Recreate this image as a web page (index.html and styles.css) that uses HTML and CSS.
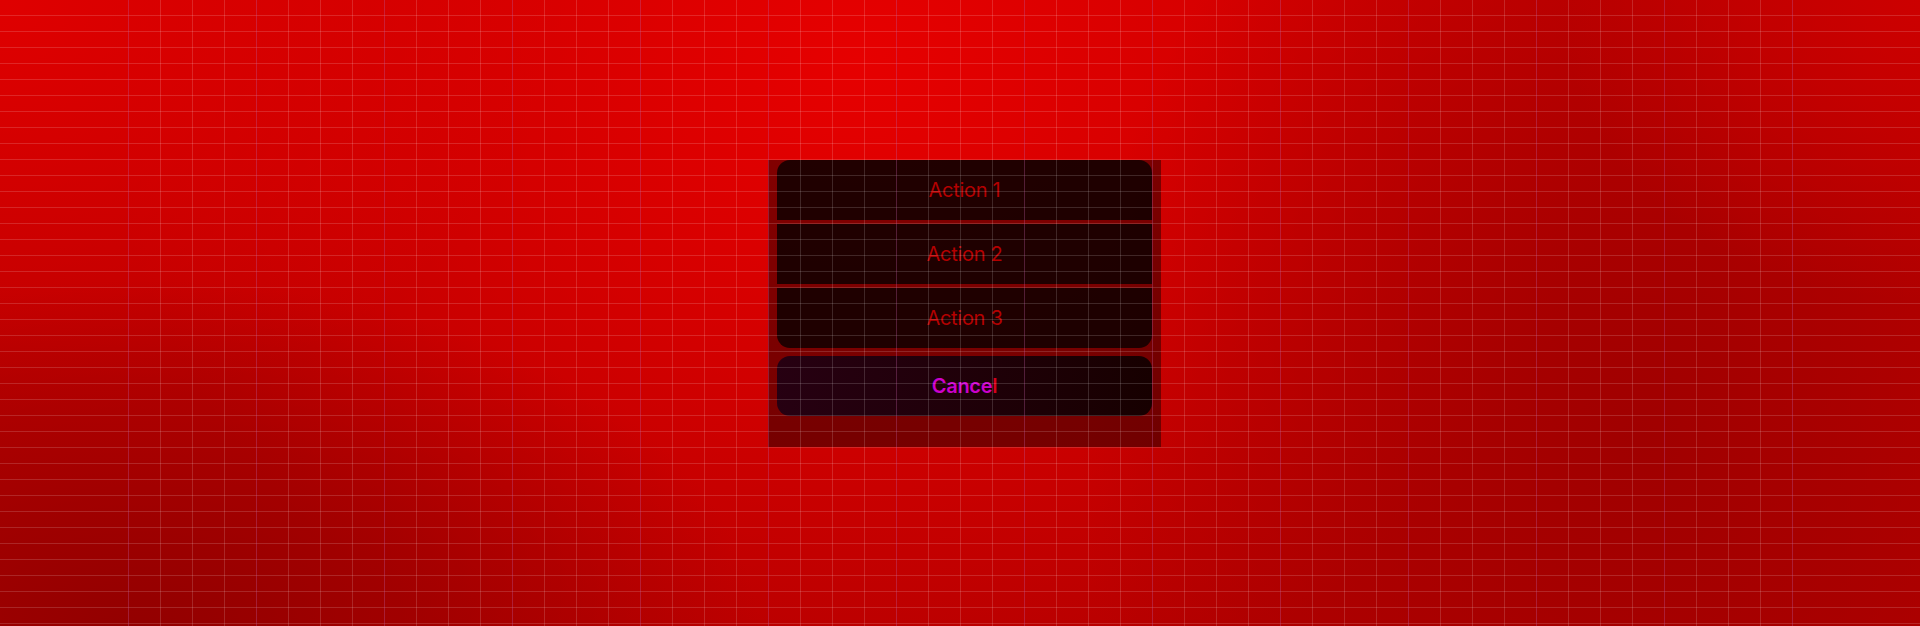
FILE: index.html
```html
<!DOCTYPE html>
<html lang="en">
<head>
<meta charset="utf-8">
<title>Action Sheet</title>
<link rel="stylesheet" href="styles.css">
</head>
<body>
<div class="page">
  <div class="sheet">
    <div class="group">
      <button class="btn btn-first">Action 1</button>
      <button class="btn">Action 2</button>
      <button class="btn btn-last">Action 3</button>
    </div>
    <div class="group group-cancel">
      <button class="btn btn-cancel">Cance<span class="tail">l</span></button>
    </div>
  </div>
  <div class="grid-h"></div>
  <div class="grid-v"></div>
</div>
</body>
</html>
```

FILE: styles.css
```css
html, body {
  margin: 0;
  padding: 0;
  width: 1920px;
  height: 626px;
  overflow: hidden;
}

.page {
  position: relative;
  width: 1920px;
  height: 626px;
  box-sizing: border-box;
  padding: 160px 0 0 768px;
  font-family: Inter, "Noto Sans", sans-serif;
  background:
    radial-gradient(ellipse 360px 300px at 1920px 0px, rgba(206,0,0,0.9), rgba(206,0,0,0) 100%),
    radial-gradient(ellipse 560px 720px at 1640px 440px, rgba(160,0,0,1), rgba(160,0,0,0) 100%),
    radial-gradient(ellipse 620px 360px at 140px 640px, rgba(146,0,0,1), rgba(146,0,0,0) 100%),
    radial-gradient(ellipse 560px 420px at 0px 0px, rgba(226,0,0,0.9), rgba(226,0,0,0) 100%),
    radial-gradient(ellipse 760px 680px at 860px 60px, rgba(230,0,0,1), rgba(230,0,0,0) 100%),
    linear-gradient(180deg, #c60000 0%, #b40000 100%);
}

.sheet {
  width: 393px;
  box-sizing: border-box;
  padding: 0 9px 31px;
  background: rgba(0, 0, 0, 0.42);
  display: flex;
  flex-direction: column;
  gap: 8px;
}

.group {
  display: flex;
  flex-direction: column;
  gap: 4px;
}

.btn {
  display: flex;
  align-items: center;
  justify-content: center;
  height: 60px;
  width: 100%;
  border: 0;
  margin: 0;
  padding: 0;
  background: rgba(0, 0, 0, 0.75);
  color: #b40000;
  font-family: Inter, "Noto Sans", sans-serif;
  font-size: 20px;
  font-weight: 400;
  letter-spacing: -0.3px;
}

.btn-first {
  border-radius: 13px 13px 0 0;
}

.btn-last {
  border-radius: 0 0 13px 13px;
}

.btn-cancel {
  border-radius: 13px;
  background: linear-gradient(90deg, rgba(18, 0, 22, 0.8), rgba(0, 0, 0, 0.8));
  color: #cc00cc;
  font-weight: 600;
}

.tail {
  color: #d8001c;
}

.grid-h {
  position: absolute;
  inset: 0;
  pointer-events: none;
  background-image: linear-gradient(180deg, transparent 15px, rgba(255, 255, 255, 0.15) 15px, rgba(255, 255, 255, 0.15) 16px);
  background-size: 100% 16px;
}

.grid-v {
  position: absolute;
  top: 0;
  bottom: 0;
  left: 128px;
  width: 1665px;
  pointer-events: none;
  background-image:
    linear-gradient(90deg, rgba(150, 0, 110, 0.22) 1px, transparent 1px),
    linear-gradient(90deg, rgba(255, 255, 255, 0.15) 1px, transparent 1px);
  background-size: 128px 100%, 32px 100%;
}
```
